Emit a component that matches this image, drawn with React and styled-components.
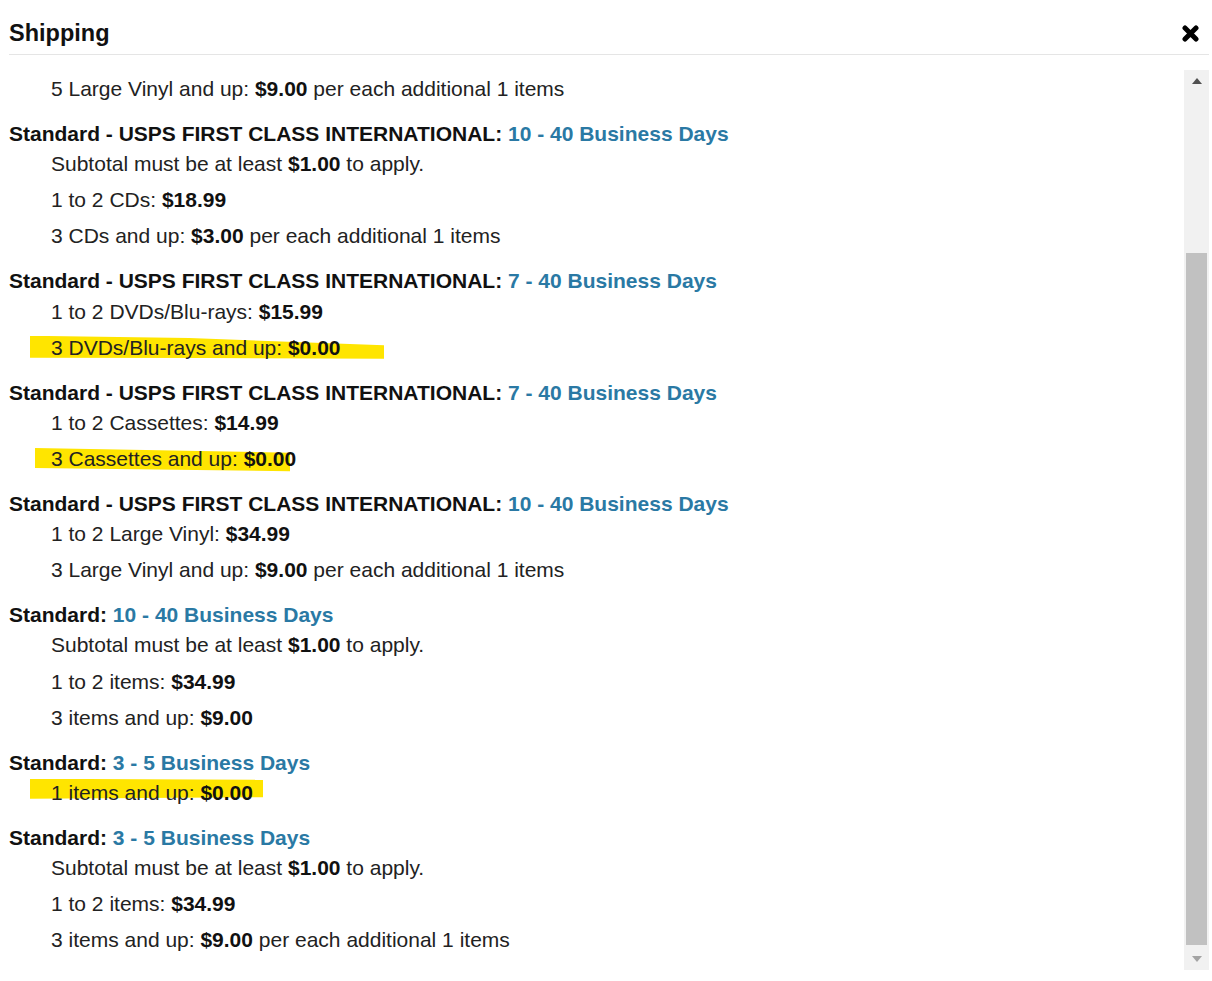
import React from 'react';
import styled, { createGlobalStyle } from 'styled-components';

const GlobalStyle = createGlobalStyle`
  body {
    margin: 0;
    background: #fff;
    font-family: "Liberation Sans", Arial, sans-serif;
  }
`;

const Modal = styled.div`
  width: 1212px;
  height: 981px;
  box-sizing: border-box;
  padding: 0 3px 0 9px;
  display: flex;
  flex-direction: column;
  overflow: hidden;
`;

const Header = styled.div`
  display: flex;
  justify-content: space-between;
  align-items: center;
  padding: 20px 0 8px;
  border-bottom: 1px solid #e5e5e5;
  margin-bottom: 15px;
`;

const Title = styled.h4`
  margin: 0;
  font-size: 23.5px;
  line-height: 26px;
  font-weight: bold;
  color: #111;
`;

const CloseButton = styled.button`
  border: none;
  background: none;
  padding: 0;
  margin-right: 10px;
  width: 17px;
  height: 17px;
  display: flex;
  cursor: pointer;
`;

const Body = styled.div`
  display: flex;
  height: 900px;
`;

const Content = styled.div`
  flex: 1;
  overflow: hidden;
  padding-top: 1px;
  font-size: 21px;
  color: #222;
`;

const Section = styled.div`
  margin-bottom: 15px;
`;

const MethodTitle = styled.div`
  font-weight: bold;
  line-height: 24.1px;
  color: #111;
`;

const Days = styled.span`
  color: #2a79a4;
`;

const Line = styled.div`
  position: relative;
  isolation: isolate;
  line-height: 24.1px;
  padding: 6px 0 6px 42px;
  & > b {
    color: #111;
  }
  ${(p) => p.mark && `
    &::before {
      content: '';
      position: absolute;
      z-index: -1;
      left: ${p.mark.left}px;
      top: ${p.mark.top}px;
      width: ${p.mark.width}px;
      height: ${p.mark.height}px;
      background: #ffe500;
      clip-path: ${p.mark.clip};
    }
  `}
`;

const Scrollbar = styled.div`
  width: 25px;
  height: 900px;
  background: #f1f1f1;
  display: flex;
  flex-direction: column;
`;

const ArrowButton = styled.div`
  height: 22px;
  display: flex;
  align-items: center;
  justify-content: center;
  color: ${(p) => (p.disabled ? '#a3a3a3' : '#505050')};
`;

const Track = styled.div`
  flex: 1;
  padding: 0 2px;
  display: flex;
  flex-direction: column;
`;

const Thumb = styled.div`
  margin-top: ${(p) => p.offset}px;
  height: ${(p) => p.size}px;
  background: #c1c1c1;
`;

const sections = [
  {
    lines: [{ text: '5 Large Vinyl and up: ', price: '$9.00', rest: ' per each additional 1 items' }],
  },
  {
    head: 'Standard - USPS FIRST CLASS INTERNATIONAL:',
    days: '10 - 40 Business Days',
    lines: [
      { text: 'Subtotal must be at least ', price: '$1.00', rest: ' to apply.' },
      { text: '1 to 2 CDs: ', price: '$18.99' },
      { text: '3 CDs and up: ', price: '$3.00', rest: ' per each additional 1 items' },
    ],
  },
  {
    head: 'Standard - USPS FIRST CLASS INTERNATIONAL:',
    days: '7 - 40 Business Days',
    lines: [
      { text: '1 to 2 DVDs/Blu-rays: ', price: '$15.99' },
      {
        text: '3 DVDs/Blu-rays and up: ',
        price: '$0.00',
        mark: { left: 21, top: 6, width: 354, height: 23, clip: 'polygon(0 0, 45% 10%, 100% 42%, 100% 100%, 50% 97%, 0 96%)' },
      },
    ],
  },
  {
    head: 'Standard - USPS FIRST CLASS INTERNATIONAL:',
    days: '7 - 40 Business Days',
    lines: [
      { text: '1 to 2 Cassettes: ', price: '$14.99' },
      {
        text: '3 Cassettes and up: ',
        price: '$0.00',
        mark: { left: 26, top: 7, width: 255, height: 24, clip: 'polygon(0 0, 100% 20%, 100% 97%, 0 84%)' },
      },
    ],
  },
  {
    head: 'Standard - USPS FIRST CLASS INTERNATIONAL:',
    days: '10 - 40 Business Days',
    lines: [
      { text: '1 to 2 Large Vinyl: ', price: '$34.99' },
      { text: '3 Large Vinyl and up: ', price: '$9.00', rest: ' per each additional 1 items' },
    ],
  },
  {
    head: 'Standard:',
    days: '10 - 40 Business Days',
    lines: [
      { text: 'Subtotal must be at least ', price: '$1.00', rest: ' to apply.' },
      { text: '1 to 2 items: ', price: '$34.99' },
      { text: '3 items and up: ', price: '$9.00' },
    ],
  },
  {
    head: 'Standard:',
    days: '3 - 5 Business Days',
    lines: [
      {
        text: '1 items and up: ',
        price: '$0.00',
        mark: { left: 21, top: 4, width: 233, height: 20, clip: 'polygon(0 0, 100% 5%, 100% 92%, 0 100%)' },
      },
    ],
  },
  {
    head: 'Standard:',
    days: '3 - 5 Business Days',
    lines: [
      { text: 'Subtotal must be at least ', price: '$1.00', rest: ' to apply.' },
      { text: '1 to 2 items: ', price: '$34.99' },
      { text: '3 items and up: ', price: '$9.00', rest: ' per each additional 1 items' },
    ],
  },
];

const CloseIcon = () => (
  <svg width="17" height="17" viewBox="0 0 17 17">
    <path d="M3 3 L14 14 M14 3 L3 14" stroke="#000" strokeWidth="5" strokeLinecap="round" />
  </svg>
);

const Triangle = ({ up }) => (
  <svg width="10" height="6" viewBox="0 0 10 6">
    <polygon points={up ? '5,0 10,6 0,6' : '0,0 10,0 5,6'} fill="currentColor" />
  </svg>
);

export default function App() {
  return (
    <Modal>
      <GlobalStyle />
      <Header>
        <Title>Shipping</Title>
        <CloseButton aria-label="Close">
          <CloseIcon />
        </CloseButton>
      </Header>
      <Body>
        <Content>
          {sections.map((section, i) => (
            <Section key={i}>
              {section.head && (
                <MethodTitle>
                  {section.head} <Days>{section.days}</Days>
                </MethodTitle>
              )}
              {section.lines.map((line, j) => (
                <Line key={j} mark={line.mark}>
                  {line.text}
                  <b>{line.price}</b>
                  {line.rest}
                </Line>
              ))}
            </Section>
          ))}
        </Content>
        <Scrollbar>
          <ArrowButton>
            <Triangle up />
          </ArrowButton>
          <Track>
            <Thumb offset={161} size={692} />
          </Track>
          <ArrowButton disabled>
            <Triangle />
          </ArrowButton>
        </Scrollbar>
      </Body>
    </Modal>
  );
}
